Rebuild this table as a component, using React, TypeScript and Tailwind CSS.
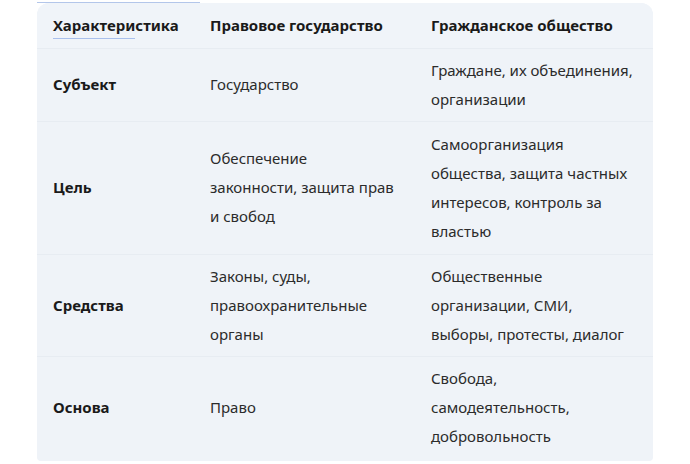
import React from "react";

const rows: { k: string; a: string; b: string; py: string }[] = [
  { k: "Субъект", a: "Государство", b: "Граждане, их объединения, организации", py: "py-[7px]" },
  {
    k: "Цель",
    a: "Обеспечение законности, защита прав и свобод",
    b: "Самоорганизация общества, защита частных интересов, контроль за властью",
    py: "py-[8px]",
  },
  {
    k: "Средства",
    a: "Законы, суды, правоохранительные органы",
    b: "Общественные организации, СМИ, выборы, протесты, диалог",
    py: "py-[7px]",
  },
  { k: "Основа", a: "Право", b: "Свобода, самодеятельность, добровольность", py: "py-[7px]" },
];

export default function App() {
  return (
    <div className="w-[690px] h-[464px] bg-white relative" style={{ fontFamily: '"Noto Sans", "Open Sans", sans-serif' }}>
      <div className="absolute left-[37px] top-[2px] w-[163px] h-px bg-[#b3c6ea]" />
      <div className="pt-[3px] pl-[37px]">
        <div className="w-[616px] h-[458px] bg-[#eff3f8] rounded-t-[12px] rounded-b-[4px] overflow-hidden">
          <table className="w-full table-fixed border-collapse text-[15px] text-[#2b2b2b]">
            <colgroup>
              <col className="w-[157px]" />
              <col className="w-[221px]" />
              <col />
            </colgroup>
            <thead>
              <tr className="h-[45px] border-b border-[#e7ecf2] bg-[#f0f4f9]">
                <th className="px-4 text-left font-bold text-[#1a1a1a] align-middle">
                  <span className="relative inline-block">
                    Характеристика
                    <span className="absolute left-0 top-[24px] w-[82px] h-px bg-[#a9c0ec]" />
                  </span>
                </th>
                <th className="px-4 text-left font-bold text-[#1a1a1a]">Правовое государство</th>
                <th className="px-4 text-left font-bold text-[#1a1a1a]">Гражданское общество</th>
              </tr>
            </thead>
            <tbody>
              {rows.map((r, i) => (
                <tr key={r.k} className={i < rows.length - 1 ? "border-b border-[#e7ecf2]" : ""}>
                  <td className={`px-4 ${r.py} leading-[29px] font-bold text-[#1a1a1a] align-middle`}>{r.k}</td>
                  <td className={`pl-4 pr-[20px] ${r.py} leading-[29px] align-middle`}>{r.a}</td>
                  <td className={`px-4 ${r.py} leading-[29px] align-middle`}>{r.b}</td>
                </tr>
              ))}
            </tbody>
          </table>
        </div>
      </div>
    </div>
  );
}
